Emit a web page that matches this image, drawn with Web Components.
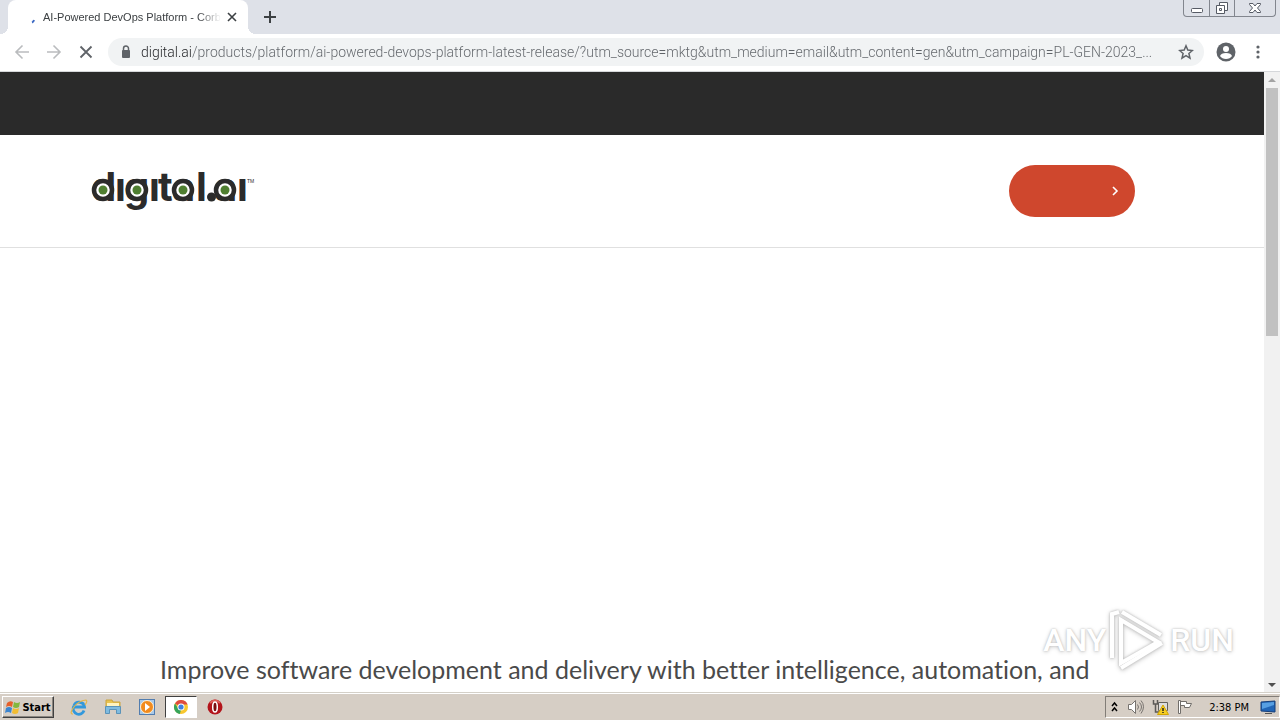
<!DOCTYPE html>
<html lang="en">
<head>
<meta charset="utf-8">
<title>AI-Powered DevOps Platform</title>
<style>
    html, body {
        margin: 0;
        height: 100%;
    }
    body {
        display: flex;
        flex-direction: column;
        overflow: hidden;
        background: #fff;
        font-family: "Noto Sans", "Open Sans", sans-serif;
    }
</style>
</head>
<body>
<browser-tabs>
    <browser-tab>AI-Powered DevOps Platform - Corb</browser-tab>
</browser-tabs>
<browser-toolbar url="digital.ai/products/platform/ai-powered-devops-platform-latest-release/?utm_source=mktg&amp;utm_medium=email&amp;utm_content=gen&amp;utm_campaign=PL-GEN-2023_..."></browser-toolbar>
<page-view>
    <site-header></site-header>
    <hero-text>Improve software development and delivery with better intelligence, automation, and</hero-text>
</page-view>
<task-bar>2:38 PM</task-bar>
<run-watermark></run-watermark>

<script>
function define(name, html, setup) {
    const template = document.createElement('template');
    template.innerHTML = html;
    customElements.define(name, class extends HTMLElement {
        constructor() {
            super();
            this.attachShadow({ mode: 'open' });
            this.shadowRoot.appendChild(template.content.cloneNode(true));
        }

        connectedCallback() {
            if (setup) setup(this);
        }
    });
}

const buttonReset = `
    button {
        display: flex;
        align-items: center;
        justify-content: center;
        flex: none;
        padding: 0;
        border: 0;
        background: none;
        font: inherit;
        color: inherit;
    }
    svg { display: block; flex: none; }
`;

define('window-controls', `
    <style>
        ${buttonReset}
        :host {
            display: flex;
            height: 16px;
            border: 1px solid #82868e;
            border-top: 0;
            border-radius: 0 0 4px 4px;
        }
        button { width: 25px; }
        button + button { border-left: 1px solid #82868e; }
        button:last-child { width: 41px; }
        svg { fill: #fff; stroke: #565b65; }
    </style>
    <button aria-label="Minimize">
        <svg width="12" height="16"><rect x=".5" y="8.500" width="11" height="4" rx="1"/></svg>
    </button>
    <button aria-label="Restore">
        <svg width="14" height="16"><path d="M4.500 2.500h8v8h-8z"/><path d="M1.500 5.500h8v8h-8z"/><path d="M4.500 8.500h2v2h-2z"/></svg>
    </button>
    <button aria-label="Close">
        <svg width="12" height="16"><path d="M.5 3.500h3.500l2 2.500 2-2.500h3.500v1L8.500 8l3 3.500v1H8L6 10l-2 2.500H.5v-1l3-3.500-3-3.500z"/></svg>
    </button>
`);

define('browser-tab', `
    <style>
        ${buttonReset}
        :host {
            display: flex;
            align-items: center;
            position: relative;
            box-sizing: border-box;
            width: 240px;
            padding: 0 8px 0 20px;
            border-radius: 8px 8px 0 0;
            background: #fff;
            color: #3c4043;
        }
        :host::before, :host::after {
            content: "";
            position: absolute;
            bottom: 0;
            width: 8px;
            height: 8px;
        }
        :host::before {
            right: 100%;
            background: radial-gradient(circle at 0 0, transparent 8px, #fff 8px);
        }
        :host::after {
            left: 100%;
            background: radial-gradient(circle at 100% 0, transparent 8px, #fff 8px);
        }
        span {
            flex: 1;
            margin-left: 5px;
            overflow: hidden;
            white-space: nowrap;
            font-family: "Liberation Sans", sans-serif;
            font-size: 11px;
            line-height: 16px;
            -webkit-mask-image: linear-gradient(90deg, #000 155px, transparent 178px);
            mask-image: linear-gradient(90deg, #000 155px, transparent 178px);
        }
        button { width: 16px; height: 16px; }
    </style>
    <svg width="10" height="16" fill="none" stroke="#3f6bc4" stroke-width="2"><path d="M4 13.500Q5.500 13 6 11"/></svg>
    <span><slot></slot></span>
    <button aria-label="Close tab">
        <svg width="10" height="10" stroke="#3c4043" stroke-width="1.600"><path d="M1 1l8 8M9 1l-8 8"/></svg>
    </button>
`);

define('browser-tabs', `
    <style>
        ${buttonReset}
        :host {
            display: flex;
            flex: none;
            height: 34px;
            padding: 0 4px 0 8px;
            background: #dee1e8;
        }
        .new { width: 28px; margin-left: 8px; }
        window-controls { margin-left: auto; }
    </style>
    <slot></slot>
    <button class="new" aria-label="New tab">
        <svg width="12" height="12" stroke="#3c4043" stroke-width="2"><path d="M6 0v12M0 6h12"/></svg>
    </button>
    <window-controls></window-controls>
`);

define('browser-toolbar', `
    <style>
        ${buttonReset}
        :host {
            display: flex;
            align-items: center;
            box-sizing: border-box;
            flex: none;
            height: 38px;
            padding: 0 14px 1px;
            gap: 16px;
            border-bottom: 1px solid #d5d7da;
            background: #fff;
        }
        button { width: 16px; height: 20px; }
        form {
            display: flex;
            flex: 1;
            align-items: center;
            height: 28px;
            margin: 0 -2px;
            padding: 0 10px;
            border-radius: 14px;
            background: #f1f3f4;
        }
        label { display: flex; width: 23px; }
        input {
            flex: 1;
            min-width: 0;
            padding: 0;
            border: 0;
            outline: 0;
            font: 300 14px/20px "Roboto", "Open Sans", sans-serif;
            /* host name dark, the rest of the address gray */
            color: transparent;
            background: linear-gradient(90deg, #202124 51px, #5f6368 51px);
            -webkit-background-clip: text;
            background-clip: text;
        }
        .profile { width: 20px; margin: 0 -2px; }
    </style>
    <button aria-label="Back"><svg width="16" height="16" fill="none" stroke="#babcbe" stroke-width="1.600"><path d="M15 8H2M8.500 1.500L2 8l6.500 6.500"/></svg></button>
    <button aria-label="Forward"><svg width="16" height="16" fill="none" stroke="#babcbe" stroke-width="1.600"><path d="M1 8h13M7.500 1.500L14 8l-6.500 6.500"/></svg></button>
    <button aria-label="Stop"><svg width="14" height="14" fill="none" stroke="#5f6368" stroke-width="1.800"><path d="M1.500 1.500l11 11M12.500 1.500l-11 11"/></svg></button>
    <form>
        <label for="url" title="Address">
            <svg width="16" height="14"><path d="M5.500 6V3.500a2.500 2.500 0 015 0V6" fill="none" stroke="#5f6368" stroke-width="1.500"/><rect x="4" y="5" width="8" height="8" rx="1" fill="#5f6368"/></svg>
        </label>
        <input id="url" type="text" spellcheck="false">
        <button type="button" aria-label="Bookmark">
            <svg width="16" height="16" fill="none" stroke="#5f6368" stroke-width="1.500"><path d="M8 1.800l1.800 4.300 4.600.4-3.500 3 1.100 4.600L8 11.700l-4 2.400 1.100-4.600-3.500-3 4.600-.4z"/></svg>
        </button>
    </form>
    <button class="profile" aria-label="Profile">
        <svg width="20" height="20"><circle cx="10" cy="10" r="9.500" fill="#5f6368"/><circle cx="10" cy="7" r="3" fill="#fff"/><path d="M4 14q1-3 6-3t6 3q-2 3-6 3t-6-3z" fill="#fff"/></svg>
    </button>
    <button aria-label="Menu">
        <svg width="4" height="16" fill="#5f6368"><circle cx="2" cy="3" r="1.600"/><circle cx="2" cy="8" r="1.600"/><circle cx="2" cy="13" r="1.600"/></svg>
    </button>
`, (el) => {
    el.shadowRoot.getElementById('url').value = el.getAttribute('url');
});

define('scroll-track', `
    <style>
        ${buttonReset}
        :host {
            display: flex;
            flex-direction: column;
            flex: none;
            width: 16px;
            background: #f1f1f1;
        }
        button { height: 16px; }
        .thumb {
            height: 40%;
            margin: 0 2px;
            background: #c1c1c1;
        }
        button:last-child { margin-top: auto; }
    </style>
    <button aria-label="Scroll up"><svg width="8" height="4" fill="#a3a3a3"><path d="M0 4l4-4 4 4z"/></svg></button>
    <div class="thumb"></div>
    <button aria-label="Scroll down"><svg width="8" height="4" fill="#505050"><path d="M0 0l4 4 4-4z"/></svg></button>
`);

define('page-view', `
    <style>
        :host {
            display: flex;
            flex: 1;
            min-height: 0;
            background: #fff;
        }
        main {
            flex: 1;
            min-width: 0;
            overflow: hidden;
        }
    </style>
    <main><slot></slot></main>
    <scroll-track></scroll-track>
`);

define('brand-logo', `
    <style>
        :host { display: block; }
        a { display: block; }
        svg { display: block; overflow: visible; }
        .word {
            font: 700 40px "Inter", sans-serif;
            fill: #2b2b2b;
        }
        .tm { font: 5px "Liberation Sans", sans-serif; fill: #2b2b2b; }
    </style>
    <a href="#" aria-label="digital.ai">
        <svg width="162" height="40">
            <text class="word" y="30" x="-1 23 32 57 66 80 104 113 122 145">dıgıtal.aı</text>
            <g fill="#fff" stroke="#2b2b2b" stroke-width="4.500">
                <circle cx="11" cy="19" r="9"/>
                <circle cx="45" cy="19" r="9"/>
                <circle cx="91" cy="19" r="9"/>
                <circle cx="133" cy="19" r="9"/>
            </g>
            <g fill="#4f7f31">
                <circle cx="11" cy="19" r="4.500"/>
                <circle cx="45" cy="19" r="4.500"/>
                <circle cx="91" cy="19" r="4.500"/>
                <circle cx="133" cy="19" r="4.500"/>
            </g>
            <circle cx="119.500" cy="26" r="4.500" fill="#2b2b2b"/>
            <text class="tm" x="155" y="12">TM</text>
        </svg>
    </a>
`);

define('site-header', `
    <style>
        ${buttonReset}
        :host { display: block; }
        .utility {
            height: 63px;
            background: #2a2a2a;
        }
        header {
            display: flex;
            align-items: center;
            justify-content: space-between;
            padding: 30px 129px 30px 92px;
            border-bottom: 1px solid #e0e0e0;
        }
        button {
            justify-content: flex-end;
            width: 126px;
            height: 52px;
            padding-right: 16px;
            border-radius: 26px;
            background: #cf472d;
        }
    </style>
    <div class="utility"></div>
    <header>
        <brand-logo></brand-logo>
        <button aria-label="Open">
            <svg width="7" height="10" fill="none" stroke="#fff" stroke-width="1.600"><path d="M1 1l4 4-4 4"/></svg>
        </button>
    </header>
`);

define('hero-text', `
    <style>
        :host {
            display: block;
            padding: 403px 160px 0;
        }
        p {
            margin: 0;
            white-space: nowrap;
            font-family: "Lato", "Noto Sans", sans-serif;
            font-size: 25px;
            font-variant-ligatures: none;
            line-height: 36px;
            color: #4a4a4a;
        }
    </style>
    <p><slot></slot></p>
`);

define('task-bar', `
    <style>
        ${buttonReset}
        :host {
            display: flex;
            align-items: center;
            flex: none;
            height: 26px;
            padding-left: 2px;
            border-top: 1px solid #fff;
            box-shadow: 0 -1px #d4d0c8;
            background: #d6cec5;
            color: #000;
            font-family: "DejaVu Sans Condensed", "DejaVu Sans", sans-serif;
            font-size: 11px;
        }
        .start {
            box-sizing: border-box;
            width: 52px;
            height: 22px;
            gap: 1px;
            border: 1px solid;
            border-color: #fff #404040 #404040 #fff;
            box-shadow: inset -1px -1px #8b8680;
            font-weight: bold;
        }
        nav {
            display: flex;
            align-items: center;
            margin-left: 8px;
        }
        nav button { width: 34px; height: 22px; }
        nav .active {
            box-sizing: border-box;
            width: 32px;
            margin: 0 1px;
            border: 1px solid;
            border-color: #404040 #fff #fff #404040;
            background: #fff;
        }
        .tray {
            display: flex;
            align-items: center;
            box-sizing: border-box;
            height: 22px;
            margin-left: auto;
            padding: 0 3px 0 4px;
            gap: 8px;
            border: 1px solid;
            border-color: #827d77 #fff #fff #827d77;
        }
        .clock { padding: 0 3px 0 8px; }
    </style>
    <button class="start">
        <svg width="16" height="16">
            <path d="M2 4q3-3 6-1L7 8Q4 6 1 8z" fill="#e6602b"/><path d="M9 3q3 2 6 0l-1 5q-3 2-6 0z" fill="#83b83f"/>
            <path d="M1 9q3-2 6 0l-1 5q-3-2-6 0z" fill="#3b85d0"/><path d="M8 9q3 2 6 0l-1 5q-3 2-6 0z" fill="#f2bd32"/>
        </svg>Start
    </button>
    <nav>
        <button aria-label="Internet Explorer">
            <svg width="18" height="18" fill="none"><path d="M14 12.500A5.500 5.500 0 113.500 9h11A5.500 5.500 0 004 7.500" stroke="#3298dc" stroke-width="2.800"/><path d="M3 16Q-1 16 3.500 9.500T16 2q2 1-1 5" stroke="#e3b64a" stroke-width="1.200"/></svg>
        </button>
        <button aria-label="Explorer">
            <svg width="18" height="18"><path d="M2 2h6l1 2h7v6H2z" fill="#e9c34f" stroke="#cba43e"/><path d="M3 5h12v4H3z" fill="#fff3bf"/><path d="M1.500 8.500h15v7h-4v-4h-7v4h-4z" fill="#7fbbe0" stroke="#5b93b8"/></svg>
        </button>
        <button aria-label="Media Player">
            <svg width="18" height="18"><rect x="1.500" y="1.500" width="15" height="15" fill="#a9c9e8" stroke="#527daf"/><circle cx="9" cy="9" r="6.500" fill="#f28b1d" stroke="#fff2d8"/><path d="M7 5l5 4-5 4z" fill="#fff"/></svg>
        </button>
        <button class="active" aria-label="Chrome">
            <svg width="16" height="16"><circle cx="8" cy="8" r="7" fill="#f8c72e"/><path d="M8 8L2 4.400A7 7 0 0114.600 5.500H8z" fill="#df4b3f"/><path d="M2 4.400L5.500 10 8 11 6.800 15A7 7 0 012 4.400z" fill="#36a45a"/><circle cx="8" cy="8" r="3.500" fill="#fff"/><circle cx="8" cy="8" r="2.600" fill="#4080df"/></svg>
        </button>
        <button aria-label="Opera">
            <svg width="16" height="16"><circle cx="8" cy="8" r="7.500" fill="#b3141b"/><path d="M3 4q5-5 10 0" fill="none" stroke="#de5b57" stroke-width="2"/><ellipse cx="8" cy="8" rx="2.300" ry="5" fill="#7b0d10" stroke="#fff" stroke-width="1.500"/></svg>
        </button>
    </nav>
    <div class="tray">
        <svg width="9" height="12" fill="none" stroke="#000" stroke-width="1.500"><path d="M2 5l2.500-3L7 5M2 10l2.500-3L7 10"/></svg>
        <svg width="17" height="16" fill="none" stroke="#77736f"><path d="M1.500 5.500h3l4-4v13l-4-4h-3z" fill="#fff"/><path d="M10.500 5.500q2 2.500 0 5M12.500 3.500q4 4.500 0 9M14 1.500q5 6 0 13"/></svg>
        <svg width="17" height="16"><path d="M6.500 3.500h9v8h-9z" fill="#ddd" stroke="#62605c"/><path d="M1.500 1v4h4V1M3.500 5v8h5" fill="none" stroke="#5c5a57" stroke-width="1.500"/><path d="M11 6l5.500 9.500H5.500z" fill="#f5cd21" stroke="#d3a500"/><path d="M11 9v3M11 13v1" stroke="#222" stroke-width="1.500"/></svg>
        <svg width="16" height="16"><path d="M3.500 2.500h6v2h5l-2 4h-5v-2h-4z" fill="#fff" stroke="#716e6a"/><path d="M1.500 1.500h2v13h-2z" fill="#fff" stroke="#716e6a"/></svg>
        <span class="clock"><slot></slot></span>
        <svg width="16" height="15"><path d="M1 2l14-1v11L1 11z" fill="#2165b6" stroke="#173f79"/><path d="M2 3l12-1v3L2 9z" fill="#579fe2"/><path d="M5 13h7v1H5z" fill="#555"/></svg>
    </div>
`);

define('run-watermark', `
    <style>
        :host {
            display: flex;
            align-items: center;
            position: absolute;
            right: 46px;
            bottom: 48px;
            gap: 2px;
            color: #fff;
            font: 500 32px/32px "Roboto", "Liberation Sans", sans-serif;
            text-shadow: 0 0 2px #bbb, 0 1px 4px #ccc;
            pointer-events: none;
        }
        svg { display: block; filter: drop-shadow(0 0 1px #bbb) drop-shadow(0 1px 2px #ccc); }
    </style>
    <span>ANY</span>
    <svg width="60" height="64" fill="none" stroke="#fff" stroke-width="4">
        <path d="M13 12v43l37-21z"/><path d="M4 50V6l7-2M14 4l39 23M13 60l41-25"/>
    </svg>
    <span>RUN</span>
`);
</script>
</body>
</html>
